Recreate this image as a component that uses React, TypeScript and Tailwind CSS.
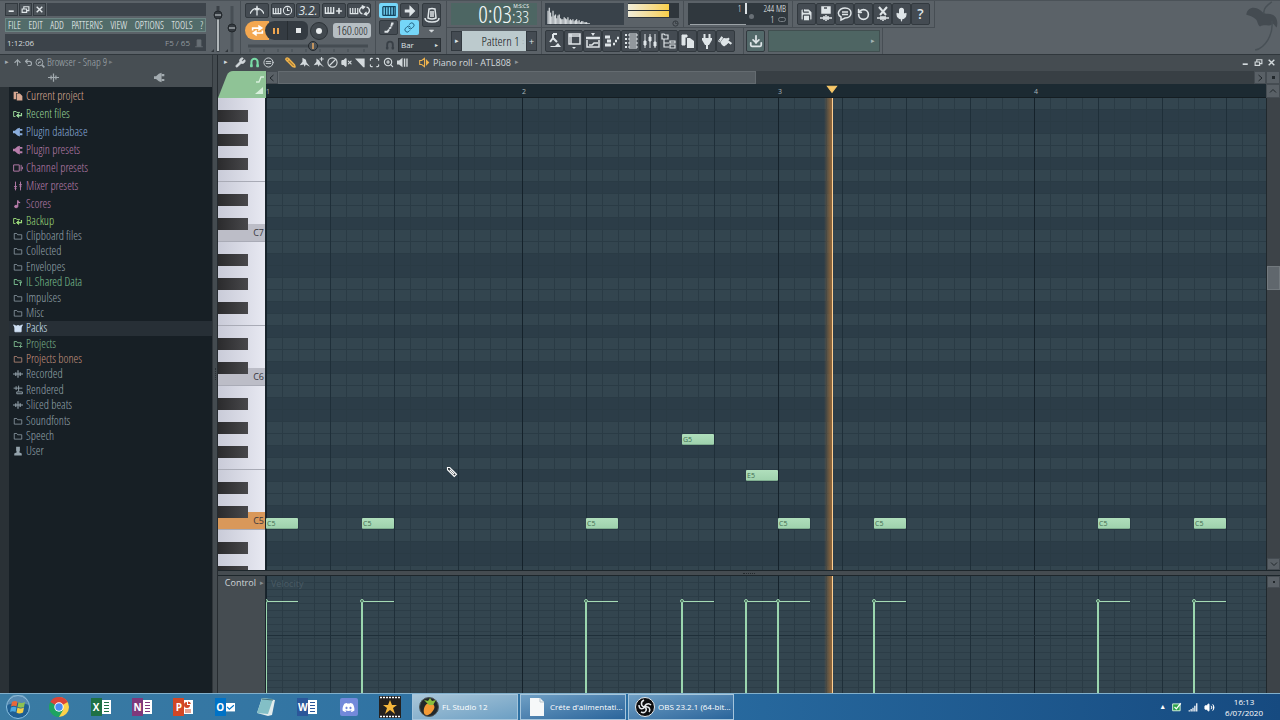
import type { CSSProperties, ReactNode } from 'react';
import {
    Wrench, Pencil, Ban, VolumeX, Scan, ZoomIn, Save,
    Mic, Download, RotateCcw, Link, Plus, ArrowUp, Undo2, Volume2,
    CircleEqual
} from 'lucide-react';
import { FaDiscord, FaHandPointUp } from 'react-icons/fa';

interface Note {
    start: number;
    row: number;
    label: string;
}

interface BrowserItem {
    name: string;
    color: string;
    icon: ReactNode;
    active?: boolean;
}

// One grid step is 16px, a bar holds 16 of them
const STEP = 16;
const ROW = 12;
const OCTAVE = ['B', 'A#', 'A', 'G#', 'G', 'F#', 'F', 'E', 'D#', 'D', 'C#', 'C'];
const DARK_ROWS = ['A#', 'A', 'F#', 'E', 'C#'];

const NOTES: Note[] = [
    { start: 0, row: 35, label: 'C5' },
    { start: 6, row: 35, label: 'C5' },
    { start: 20, row: 35, label: 'C5' },
    { start: 26, row: 28, label: 'G5' },
    { start: 30, row: 31, label: 'E5' },
    { start: 32, row: 35, label: 'C5' },
    { start: 38, row: 35, label: 'C5' },
    { start: 52, row: 35, label: 'C5' },
    { start: 58, row: 35, label: 'C5' },
];

const KEYS = Array.from({ length: 40 }, (_, i) => ({
    name: OCTAVE[i % 12],
    octave: 7 - Math.floor(i / 12),
}));

function Glyph({ children, size = 'size-4' }: { children: ReactNode; size?: string }) {
    return (
        <svg viewBox="0 0 16 16" className={`${size} shrink-0`} fill="none" stroke="currentColor" strokeWidth="1.5" aria-hidden="true">
            {children}
        </svg>
    );
}

const folder = <path d="M2 4h4l1.500 2H14v7H2z" strokeWidth="1.200" />;
const wave = <path d="M0 8h16M4.500 5v6M8 2v12M11.500 5v6" strokeWidth="1.800" />;
const plugShape = (
    <g fill="currentColor" stroke="none">
        <path d="M0 6h3l4-3.500 4-1.500v14l-4-1.500L3 10H0z" />
        <path d="M11 3h4v3h-4zM11 10h4v3h-4z" />
    </g>
);
const recentFolder = <><path d="M4 12H1V4h4l1 1.500h5" /><path d="M7 10.500h6.500V6.500" strokeWidth="2" /><path d="M9 7.500l-3.500 3 3.500 3z" fill="currentColor" /></>;
const pianoKeys = <path d="M2 3v9h12V3M6 3v9M10 3v9" strokeWidth="2" />;
const horseshoe = <path d="M3.500 15V7a4.500 4.500 0 0 1 9 0v8M1.500 12.500h4M10.500 12.500h4" strokeWidth="3" />;
const magnifier = <><circle cx="7" cy="7" r="5.500" /><path d="M11 11l4 4" strokeWidth="2.500" /><path d="M5 7h4M9 4.500L5 9.500" /></>;

const CATEGORIES: BrowserItem[] = [
    { name: 'Current project', color: 'text-[#d8a892]', icon: <g fill="currentColor" stroke="none"><path d="M1 1h7v2H5v10H1z" /><path d="M6 4h5l4 4v7H6z" /></g> },
    { name: 'Recent files', color: 'text-[#9bd99b]', icon: recentFolder },
    { name: 'Plugin database', color: 'text-[#8aaddc]', icon: plugShape },
    { name: 'Plugin presets', color: 'text-[#b87dab]', icon: plugShape },
    { name: 'Channel presets', color: 'text-[#b87dab]', icon: <><path d="M1 3h9v10H1z" /><path d="M13 3v10M15 6v4" /></> },
    { name: 'Mixer presets', color: 'text-[#b87dab]', icon: <path d="M4 1v14M12 1v14M1.500 9h5M9.500 6h5M2.500 12h3M10.500 9h3" /> },
    { name: 'Scores', color: 'text-[#b87dab]', icon: <><ellipse cx="5" cy="12" rx="2.500" ry="2" fill="currentColor" /><path d="M7.500 12V2q0 3 4 4" strokeWidth="2" /></> },
];

const FOLDERS: BrowserItem[] = [
    { name: 'Backup', color: 'text-[#9bd97a]', icon: recentFolder },
    { name: 'Clipboard files', color: 'text-[#94a3ac]', icon: folder },
    { name: 'Collected', color: 'text-[#94a3ac]', icon: folder },
    { name: 'Envelopes', color: 'text-[#94a3ac]', icon: folder },
    { name: 'IL Shared Data', color: 'text-[#7cc092]', icon: <path d="M8 12H2V4h4l1 2h6v3M10 9h4M12 9v5" /> },
    { name: 'Impulses', color: 'text-[#94a3ac]', icon: folder },
    { name: 'Misc', color: 'text-[#94a3ac]', icon: folder },
    { name: 'Packs', color: 'text-[#cfe0f4]', active: true, icon: <path d="M3 6h10v8H3zM1 3l4 2 3-1 3 1 4-2-2 4H3z" fill="currentColor" /> },
    { name: 'Projects', color: 'text-[#7bb48c]', icon: <path d="M8 12H2V4h4l1 2h6v3M9 12h6M12 9v5" /> },
    { name: 'Projects bones', color: 'text-[#c6937f]', icon: folder },
    { name: 'Recorded', color: 'text-[#94a3ac]', icon: wave },
    { name: 'Rendered', color: 'text-[#94a3ac]', icon: <><path d="M1 5h14M5 2v6M9 1v9" /><path d="M6 11h9v3H6z" /></> },
    { name: 'Sliced beats', color: 'text-[#94a3ac]', icon: wave },
    { name: 'Soundfonts', color: 'text-[#94a3ac]', icon: folder },
    { name: 'Speech', color: 'text-[#94a3ac]', icon: folder },
    { name: 'User', color: 'text-[#94a3ac]', icon: <g fill="currentColor" stroke="none"><path d="M5 1h6v6l-1 3 4 2v3H2v-3l4-2-1-3z" /></g> },
];

function ToolButton({ label, children, width = 'w-[19px]', className = 'bg-[#444b52] text-[#dfe5e8]' }: {
    label: string;
    children: ReactNode;
    width?: string;
    className?: string;
}) {
    return (
        <button
            aria-label={label}
            className={`flex shrink-0 items-center justify-center rounded-[2px] border border-[#32393f] ${width} ${className}`}
        >
            {children}
        </button>
    );
}

function WindowButtons({ className }: { className: string }) {
    return (
        <>
            <button aria-label="Minimize" className={className}><Glyph size="size-[9px]"><path d="M3 11h9" strokeWidth="3" /></Glyph></button>
            <button aria-label="Restore" className={className}><Glyph size="size-[9px]"><path d="M5 6V3h9v7h-3M2 7h8v6H2z" strokeWidth="2" /></Glyph></button>
            <button aria-label="Close" className={className}><Glyph size="size-[9px]"><path d="M3 3l10 10M13 3L3 13" strokeWidth="2.500" /></Glyph></button>
        </>
    );
}

function MainMenu() {
    const items = ['FILE', 'EDIT', 'ADD', 'PATTERNS', 'VIEW', 'OPTIONS', 'TOOLS', '?'];
    return (
        <div className="flex w-[206px] shrink-0 flex-col gap-[2px] py-[2px] pl-[5px]">
            <div className="flex h-[13px] gap-px">
                <WindowButtons className="flex w-[13px] items-center justify-center border border-[#32393f] bg-[#4b5258] text-[#dfe5e8]" />
                <div className="flex-1 bg-[#3d444b]" />
            </div>
            <nav className="flex h-[14px] items-center justify-between border border-[#6c8583] bg-[#526c6a] px-[2px] text-[10px] leading-3 text-[#f2f8f8]">
                {items.map((item) => (
                    <button key={item}>{item}</button>
                ))}
            </nav>
            <div className="flex h-[17px] items-center justify-between bg-[#3c434a] px-[2px] font-['Open_Sans',sans-serif] text-[8px] text-[#d5dadd]">
                <span>1:12:06</span>
                <span className="flex items-center gap-1 text-[#91999e]">
                    F5 / 65
                    <Glyph size="size-[10px]"><path d="M5 3h6v10H5zM2 14h12" fill="currentColor" opacity=".5" /></Glyph>
                </span>
            </div>
        </div>
    );
}

function MasterSliders() {
    return (
        <div className="flex w-[34px] shrink-0 justify-center pt-1">
            <svg viewBox="0 0 34 50" className="h-[50px] w-[34px]" role="img" aria-label="Master volume and pitch">
                <path d="M12 1v46" stroke="#3a4046" strokeWidth="3" />
                <path d="M12 12v34" stroke="#d9dee1" strokeWidth="1.500" />
                <path d="M26 1v46" stroke="#474e54" strokeWidth="3" />
                <circle cx="12" cy="10" r="4" fill="#343a40" stroke="#22272b" />
                <circle cx="26" cy="23" r="4" fill="#343a40" stroke="#22272b" />
                <path d="M9 10h6M23 23h6" stroke="#d0d6d9" />
                <path d="M5 47l3-3v3zM19 47l3-3v3z" fill="#30363b" />
            </svg>
        </div>
    );
}

function Transport() {
    return (
        <div className="flex w-[136px] shrink-0 flex-col border-x border-[#474e54] px-1 pt-[2px]">
            <div className="flex h-[15px] justify-between">
                <ToolButton label="Metronome" width="w-6"><Glyph size="size-[14px]"><path d="M0 11q3-6 8-6t8 6M8 2v11" /><path d="M5 7l3-4 3 4z" fill="currentColor" stroke="none" /></Glyph></ToolButton>
                <ToolButton label="Wait for input" width="w-6">
                    <Glyph size="size-[10px]">{pianoKeys}</Glyph>
                    <Glyph size="size-[11px]"><circle cx="8" cy="8" r="6" /><path d="M8 4v4h3" /></Glyph>
                </ToolButton>
                <ToolButton label="Countdown" width="w-6">
                    <span className="font-['Open_Sans',sans-serif] text-xs leading-3 italic">3.2.</span>
                </ToolButton>
                <ToolButton label="Blend recording" width="w-6">
                    <Glyph size="size-[11px]">{pianoKeys}</Glyph>
                    <Plus className="size-2" strokeWidth={5} />
                </ToolButton>
                <ToolButton label="Loop recording" width="w-6">
                    <Glyph size="size-[10px]">{pianoKeys}</Glyph>
                    <Glyph size="size-[11px]"><path d="M7 3A5 5 0 0 0 5 13M9 13A5 5 0 0 0 11 3M4 1l4 2-3 3M12 15l-4-2 3-3" strokeWidth="2" /></Glyph>
                </ToolButton>
            </div>
            <div className="mt-[3px] flex h-[19px] items-center">
                <button aria-label="Song mode" className="flex h-[19px] w-6 items-center justify-center rounded-l-full bg-[#f3a750] text-white">
                    <Glyph size="size-[13px]"><path d="M2 8V5h8M14 8v3H6" strokeWidth="2" /><path d="M9 1l6 4-6 4zM7 7l-6 4 6 4z" fill="currentColor" stroke="none" /></Glyph>
                </button>
                <button aria-label="Pause" className="-ml-1 flex h-[19px] w-[22px] items-center justify-center gap-[2px] rounded-l-full bg-[#343b42]">
                    <span className="h-[6px] w-[2px] bg-[#efa64f]" />
                    <span className="h-[6px] w-[2px] bg-[#efa64f]" />
                </button>
                <button aria-label="Stop" className="flex h-[19px] w-[21px] items-center justify-center rounded-r-md border-l border-[#272d32] bg-[#343b42]">
                    <span className="size-[5px] bg-[#e4e8ea]" />
                </button>
                <button aria-label="Record" className="ml-[2px] flex size-[18px] items-center justify-center rounded-full border border-[#2c3237] bg-[#42494f]">
                    <span className="size-[6px] rounded-full bg-[#e9edef]" />
                </button>
                <button aria-label="Tempo" className="ml-auto h-[15px] w-[38px] rounded-[3px] bg-[#b6bec3] text-[13px] leading-[15px] text-[#15191c]">
                    160<span className="text-[11px]">.000</span>
                </button>
            </div>
            <svg viewBox="0 0 126 12" className="h-3 w-full" role="img" aria-label="Song position">
                <path d="M3 6h120" stroke="#454c52" strokeWidth="3" />
                <path d="M5 9v3M19 9v3M33 9v3M47 9v3M61 9v3M75 9v3M89 9v3M103 9v3M119 9v3" stroke="#454c52" />
                <circle cx="68" cy="6" r="4.500" fill="#4d545a" stroke="#23292d" />
                <path d="M68 3v6" stroke="#e8a860" strokeWidth="1.500" />
            </svg>
        </div>
    );
}

function SnapPanel() {
    return (
        <div className="flex w-[71px] shrink-0 flex-col justify-between border-r border-[#474e54] pt-[2px] pr-[5px] pb-[2px] pl-[3px]">
            <div className="flex gap-[3px]">
                <div className="grid flex-1 grid-cols-2 gap-[2px]">
                    <button aria-label="Typing keyboard" className="flex h-[15px] items-center justify-center rounded-[2px] bg-[#75d6f8] text-[#16465f]">
                        <Glyph size="size-[14px]"><path d="M1 3v10M4 3v10M7 3v10M10 3v10M13 3v10M1 3h14v10H1" /></Glyph>
                    </button>
                    <ToolButton label="Step" width="w-full"><Glyph size="size-3"><path d="M1 8h9" strokeWidth="4" /><path d="M8 2l6 6-6 6z" fill="currentColor" /></Glyph></ToolButton>
                    <ToolButton label="Slide" width="w-full"><Glyph size="size-3"><path d="M2 13h4l2-3M8 9l3-2M11 6l1-4h2" strokeWidth="2.500" /></Glyph></ToolButton>
                    <button aria-label="Link" className="flex h-[15px] items-center justify-center rounded-[2px] bg-[#75d6f8] text-[#1f5a7a]">
                        <Link className="size-[11px]" />
                    </button>
                </div>
                <div className="flex flex-col items-center">
                    <ToolButton label="Metronome knob" width="h-6 w-[19px]"><Glyph><path d="M5 2q3-1 6 0l1 9q-4 2-8 0z" /><path d="M1 11q0 4 7 4t7-4M7 4v6M9 4v6" /></Glyph></ToolButton>
                    <Glyph size="size-[7px]"><path d="M3 7h10l-5 5z" fill="currentColor" className="text-[#d6dbde]" /></Glyph>
                </div>
            </div>
            <label className="flex items-center justify-end gap-[3px] text-[#394047]">
                <Glyph size="size-[10px]">{horseshoe}</Glyph>
                <span className="flex h-[14px] w-[43px] items-center border border-[#2b3136] bg-[#3a4147] px-[2px] text-[#dde2e4]">
                    <select aria-label="Snap" className="w-full appearance-none bg-transparent font-['Open_Sans',sans-serif] text-[8px] leading-3 outline-none">
                        <option>Bar</option>
                    </select>
                    <span className="text-[6px]">▸</span>
                </span>
            </label>
        </div>
    );
}

const SPECTRUM = [14, 17, 12, 8, 14, 9, 10, 6, 9, 10, 6, 5, 5, 7, 6, 5, 7, 4, 5, 4, 5, 3, 4, 5, 3, 4, 2, 3, 3, 2, 2, 2, 1, 1];

function Panels() {
    return (
        <div className="flex shrink-0 flex-col">
            <div className="flex h-[27px]">
                <div className="w-[95px] border-r border-b border-[#474e54] px-1 py-[2px]">
                    <div className="flex h-full items-start justify-end bg-[#4d6663] pr-2 text-[#f4fafa]">
                        <span className="text-[24px] leading-[22px]">0:03</span>
                        <span className="flex flex-col items-end leading-none">
                            <span className="font-['Open_Sans',sans-serif] text-[5px] leading-[6px]">M:S:CS</span>
                            <span className="text-[17px] leading-[16px]">:33</span>
                        </span>
                    </div>
                </div>
                <div className="flex w-[142px] gap-1 border-r border-b border-[#474e54] py-[2px] pr-1 pl-[3px]">
                    <svg viewBox="0 0 80 23" className="h-[22px] w-20 bg-[#39424a]" role="img" aria-label="Spectrum">
                        {SPECTRUM.map((h, i) => (
                            <path key={i} d={`M${2 + i * 1.3} 22V${22 - h}`} stroke="#d5dadd" strokeWidth="1.300" />
                        ))}
                    </svg>
                    <div className="flex w-[52px] flex-col items-end gap-[2px]">
                        <div className="flex w-full flex-col gap-px bg-[#2f363c] py-px">
                            <div className="h-[6px] w-[41px] bg-linear-to-r from-[#f0ecd8] to-[#f9cf45]" />
                            <div className="h-[6px] w-[41px] bg-linear-to-r from-[#f0ecd8] to-[#f9cf45]" />
                        </div>
                        <Glyph size="size-[7px]"><circle cx="8" cy="8" r="6" stroke="#30363b" strokeWidth="2" /><path d="M8 3v5h5" stroke="#30363b" /></Glyph>
                    </div>
                </div>
                <div className="w-[109px] border-r border-b border-[#474e54] px-1 py-[2px]">
                    <div className="flex h-full flex-col bg-[#30383e] px-[2px] text-[9px] leading-[11px] text-[#eef2f4]">
                        <div className="flex justify-end">
                            <span>1</span>
                            <span className="mr-4 ml-1 w-[2px] bg-[#dce1e4]" />
                            <span>244 MB</span>
                        </div>
                        <div className="flex items-center">
                            <span className="h-px w-14 self-end bg-[#9ba2a6]" />
                            <span className="ml-[3px] size-[5px] self-start rounded-full bg-[#697076]" />
                            <span className="mr-1 ml-auto">1</span>
                            <span className="h-[5px] w-2 rounded-full border border-[#798086]" />
                        </div>
                    </div>
                </div>
                <div className="flex border-r border-b border-[#474e54] py-[2px] pr-1 pl-1">
                    <ToolButton label="Save"><Save className="size-[15px]" fill="currentColor" stroke="#444b52" /></ToolButton>
                    <ToolButton label="Render as audio">
                        <Glyph><path d="M4 1h8v6H4z" fill="currentColor" /><path d="M6 2h3" stroke="#444b52" /><path d="M2 12h12M6 10v4M10 10v4M8 9v6" /></Glyph>
                    </ToolButton>
                    <ToolButton label="Comments"><Glyph><path d="M8 2c8 0 8 10 0 10l-4 2v-3C-1 8 2 2 8 2zM5 6h6M5 8.500h6" /></Glyph></ToolButton>
                    <ToolButton label="Undo"><RotateCcw className="size-[13px]" strokeWidth={3} /></ToolButton>
                    <ToolButton label="Cut">
                        <Glyph><path d="M4 1l7 8M12 1L5 9" strokeWidth="2" /><path d="M2 12h12M6 10v4M10 10v4M8 10v5" /></Glyph>
                    </ToolButton>
                    <ToolButton label="Record audio"><Mic className="size-[15px]" fill="currentColor" strokeWidth={2} /></ToolButton>
                    <ToolButton label="Help"><span className="font-['Open_Sans',sans-serif] text-[14px] leading-4 font-semibold">?</span></ToolButton>
                </div>
            </div>
            <div className="flex h-[26px]">
                <div className="flex w-[95px] border-r border-[#474e54] px-1 py-[3px]">
                    <button aria-label="Previous pattern" className="w-[11px] border border-[#32393f] bg-[#444b52] text-[7px] text-[#dfe5e8]">▸</button>
                    <button className="flex flex-1 items-center justify-end gap-[3px] bg-[#bccacd] pr-[2px] text-[13px] leading-4 whitespace-nowrap text-[#101416]">
                        Pattern 1 <span className="text-[8px] text-[#7a878b]">:</span>
                    </button>
                    <button aria-label="Add pattern" className="w-[11px] border border-[#32393f] bg-[#444b52] font-['Open_Sans',sans-serif] text-[9px] leading-none text-[#dfe5e8]">+</button>
                </div>
                <div className="flex w-[202px] border-r border-[#474e54] py-[2px] pr-[3px] pl-[3px]">
                    <ToolButton label="Touch controller"><Glyph><path d="M6 1h4M6 1v4l4 4M6 5L3 9" strokeWidth="2" /><path d="M3 14h11l-3-4-3 3H4z" fill="currentColor" stroke="none" /></Glyph></ToolButton>
                    <ToolButton label="Playlist"><Glyph><path d="M3 1h11v10H3zM5 1v10M3 3h11" /><path d="M6 14h4l-2 2z" fill="currentColor" stroke="none" /></Glyph></ToolButton>
                    <ToolButton label="Step sequencer"><Glyph><path d="M6 0h4l-2 3z" fill="currentColor" stroke="none" /><path d="M1 5h14" strokeWidth="2.500" /><path d="M2 7v7h12V7M4 12h3l2-2h4" /></Glyph></ToolButton>
                    <ToolButton label="Piano roll"><Glyph><path d="M1 4h5M3 8h4M1 12h6" strokeWidth="2.800" /><path d="M9 11h2M11 8h2M13 5h2" strokeWidth="2.500" /></Glyph></ToolButton>
                    <ToolButton label="Channel rack"><Glyph><path d="M2 2h2M2 6h2M2 10h2M2 14h2" strokeWidth="2" /><path d="M6 1h8v2H6zM6 5h8v2H6zM6 9h8v2H6zM6 13h8v2H6z" strokeWidth="1" /></Glyph></ToolButton>
                    <ToolButton label="Mixer"><Glyph><path d="M3 1v14M8 1v14M13 1v14" strokeWidth="1" /><path d="M2 8h2v4H2zM7 4h2v4H7zM12 9h2v4h-2z" fill="currentColor" strokeWidth="1" /></Glyph></ToolButton>
                    <ToolButton label="Browser"><Glyph><path d="M1 1h2l1 1h3v4H1zM3 6v8h5M3 10h5M9 8h5v2H9zM9 12h5v3H9z" strokeWidth="1.200" /></Glyph></ToolButton>
                    <ToolButton label="Copy"><Glyph><path d="M2 2h5v2H5v8H2z" fill="currentColor" strokeWidth="1" /><path d="M7 5h3l4 3v7H7z" fill="currentColor" stroke="none" /></Glyph></ToolButton>
                    <ToolButton label="Plugins"><Glyph><path d="M3 5h10v2l-3 5H6L3 7z" fill="currentColor" stroke="none" /><path d="M5.500 1v4M10.500 1v4M8 11v5" strokeWidth="2" /></Glyph></ToolButton>
                    <ToolButton label="Tempo tapper"><FaHandPointUp className="size-[13px] rotate-[125deg]" /></ToolButton>
                </div>
                <div className="flex gap-[3px] border-r border-[#474e54] py-[2px] pr-[2px] pl-[2px]">
                    <ToolButton label="Online content" className="bg-[#53696a] text-[#dfe5e8]"><Download className="size-[14px]" strokeWidth={3} /></ToolButton>
                    <div className="flex w-[112px] items-center justify-end border border-[#414f50] bg-[#4e6563] pr-1 text-[7px] text-[#a4b4b3]">▸</div>
                </div>
            </div>
        </div>
    );
}

function Toolbar() {
    return (
        <header className="flex h-[54px] shrink-0 border-t border-[#4b5258] bg-[#5b6268]">
            <MainMenu />
            <MasterSliders />
            <Transport />
            <SnapPanel />
            <Panels />
            <svg viewBox="0 0 34 54" className="ml-auto h-[53px] w-[34px] shrink-0" role="img" aria-label="Logo">
                <path d="M0 14C1 6 9 5 15 10c3 3 4 3 7 3 8 0 11 6 9 14-2-1-2-3-4-4-3 4-8 0-13 3-3-2-2-6-5-8-3-2-5-3-9-4z" fill="#444b51" />
                <path d="M26 1C20 5 17 9 18 13M26 20c2 14-7 28-17 30" fill="none" stroke="#485056" strokeWidth="1.500" />
            </svg>
        </header>
    );
}

function BrowserRow({ item, className }: { item: BrowserItem; className: string }) {
    return (
        <li className={className}>
            <button className={`flex h-full w-full items-center gap-[3px] pl-1 text-left leading-[14px] ${item.color} ${item.active ? 'bg-[#272f36]' : ''}`}>
                <Glyph size="size-[10px]">{item.icon}</Glyph>
                {item.name}
            </button>
        </li>
    );
}

function Browser() {
    return (
        <aside className="flex w-[218px] shrink-0 border-r border-[#262c31] bg-[#444b50]">
            <div className="flex flex-1 flex-col">
                <div className="flex h-8 shrink-0 flex-col bg-[#474e53] text-[#a3abb0]">
                    <div className="flex h-[15px] items-center gap-[2px] pl-[5px] text-[11px]">
                        <span className="w-[6px] text-[7px]">▸</span>
                        <ArrowUp className="size-[9px]" strokeWidth={3} />
                        <Undo2 className="size-[9px]" strokeWidth={3} />
                        <Glyph size="size-[10px]">{magnifier}</Glyph>
                        <span>Browser - Snap 9</span>
                        <span className="text-[7px] text-[#747c81]">▸</span>
                    </div>
                    <div className="flex h-[15px] items-center justify-around">
                        <Glyph size="size-[11px]">{wave}</Glyph>
                        <Glyph size="size-[11px]">{plugShape}</Glyph>
                    </div>
                </div>
                <div className="min-h-0 flex-1 border-l-[9px] border-[#2a3136] bg-[#171f25] text-[12px]">
                    <ul>
                        {CATEGORIES.map((item) => <BrowserRow key={item.name} item={item} className="h-[18px]" />)}
                    </ul>
                    <ul className="flex h-[246px] flex-col">
                        {FOLDERS.map((item) => <BrowserRow key={item.name} item={item} className="min-h-0 flex-1" />)}
                    </ul>
                </div>
            </div>
            <div className="flex w-[5px] items-center justify-center border-l border-[#30363b]">
                <span className="h-3 border-l border-dotted border-[#2a3035]" />
            </div>
        </aside>
    );
}

function RollToolbar() {
    return (
        <div className="flex h-4 shrink-0 items-center bg-[#454c51] pb-px pl-[6px] text-[#d3d9dc]">
            <span className="w-2 text-[7px]">▸</span>
            <div className="flex items-center gap-[3px] pl-[3px]">
                <Wrench className="size-[11px]" fill="currentColor" />
                <Glyph size="size-[11px] text-[#79dba6]">{horseshoe}</Glyph>
                <CircleEqual className="size-[11px]" />
            </div>
            <div className="ml-[11px] flex items-center gap-[3px]">
                <Pencil className="size-[11px] -scale-x-100 text-[#efb34d]" fill="#a67c35" strokeWidth={3} />
                <Glyph size="size-[11px]"><path d="M5 1l5 3 1 4 5 6-6-3-2 3-1-3-6 1 4-5z" fill="currentColor" stroke="none" /></Glyph>
                <Glyph size="size-[11px]"><path d="M5 2l4 3 2 4 5 6-6-4-2 3-1-3-6 1 4-5z" fill="currentColor" stroke="none" /><path d="M12.500 0v6M9.500 3h6" /></Glyph>
                <Ban className="size-[11px] rotate-90" strokeWidth={2.5} />
                <VolumeX className="size-[11px]" fill="currentColor" strokeWidth={2.5} />
                <Glyph size="size-[11px]"><path d="M0 2h14v13h-2z" fill="currentColor" stroke="none" /><path d="M1 6l9 9" stroke="#454c51" strokeWidth="2" /></Glyph>
                <Scan className="size-[11px]" strokeWidth={2.5} />
                <ZoomIn className="size-[11px]" strokeWidth={2.5} />
                <Glyph size="size-[11px]"><path d="M0 5h3l5-4v14l-5-4H0z" fill="currentColor" stroke="none" /><path d="M11 2v12M14.500 2v12" strokeWidth="2" /></Glyph>
            </div>
            <Glyph size="ml-[11px] size-[11px]"><path d="M1 5h3l4-3v12l-4-3H1z" stroke="#efb34d" /><path d="M10 3l5 5-5 5z" fill="#efb34d" stroke="none" /></Glyph>
            <h1 className="ml-[3px] font-['Open_Sans',sans-serif] text-[9px]">Piano roll - ATL808</h1>
            <span className="ml-1 text-[7px] text-[#8d9499]">▸</span>
            <div className="ml-auto flex gap-[3px] pr-1">
                <WindowButtons className="flex size-[10px] items-center justify-center" />
            </div>
        </div>
    );
}

function Keyboard() {
    return (
        <div className="w-12 shrink-0 overflow-hidden border-r border-[#1a252c] bg-linear-to-r from-[#c9cbd8] to-[#e8e9f2] font-['Open_Sans',sans-serif]">
            {KEYS.map((key, i) => {
                const black = key.name.includes('#');
                const root = key.name === 'C';
                const middle = root && key.octave === 5;
                return (
                    <div key={i} className={`relative h-3 ${root || key.name === 'F' ? 'border-b border-[#a9abb6]' : ''} ${middle ? 'bg-[#d9985a]' : root ? 'bg-[#bcbdc7]' : ''}`}>
                        {black && <div className="h-3 w-[30px] bg-linear-to-r from-[#2b2b2d] to-[#48484b]" />}
                        {root && (
                            <span className={`absolute right-0 bottom-0 flex h-[17px] w-[17px] items-center justify-end pr-px text-[9px] leading-[17px] text-[#37363d] ${middle ? 'bg-[#d9985a]' : 'bg-[#bcbdc7]'}`}>
                                C{key.octave}
                            </span>
                        )}
                    </div>
                );
            })}
        </div>
    );
}

function GridLines() {
    return (
        <div className="absolute inset-0 bg-[repeating-linear-gradient(90deg,#15222b_0_1px,transparent_1px_256px),repeating-linear-gradient(90deg,#1f2f39_0_1px,transparent_1px_64px),repeating-linear-gradient(90deg,#2a3b45_0_1px,transparent_1px_16px)]" />
    );
}

function Playhead() {
    return <div className="absolute inset-y-0 left-[558px] w-[9px] border-r border-[#ffcf92] bg-linear-to-r from-transparent to-[#93683a]" />;
}

function NoteGrid() {
    return (
        <div className="relative min-w-0 flex-1 overflow-hidden bg-[#33454f] font-['Open_Sans',sans-serif]">
            {KEYS.map((key, i) => (
                <div key={i} className={`h-3 border-b border-[#2a3b45] ${DARK_ROWS.includes(key.name) ? 'bg-[#2c3d48]' : 'bg-[#33454f]'}`} />
            ))}
            <GridLines />
            <Playhead />
            {NOTES.map((note) => {
                const place: CSSProperties = { left: note.start * STEP, top: note.row * ROW };
                return (
                    <div key={note.start} style={place} className="absolute h-[11px] w-8 rounded-[1px] border-b border-[#7fae90] bg-linear-to-b from-[#b0dfbc] to-[#9fd2ad] pl-px text-[7px] leading-[11px] text-[#3f6b4f]">
                        {note.label}
                    </div>
                );
            })}
            <Glyph size="absolute top-[368px] left-[180px] size-3">
                <path d="M2 2l3 0 9 9-3 3-9-9z" fill="#1c252b" stroke="#fff" />
                <path d="M5 5l6 6" stroke="#fff" />
            </Glyph>
        </div>
    );
}

function VelocityLane() {
    return (
        <div className="relative min-w-0 flex-1 overflow-hidden bg-[#33454f] bg-[repeating-linear-gradient(180deg,transparent_0_6px,#2c3d47_6px_7px)]">
            <GridLines />
            <div className="absolute inset-x-0 top-1/2 h-px bg-[#1f2f39]" />
            <span className="absolute top-0 left-[5px] font-['Open_Sans',sans-serif] text-[9px] leading-[15px] text-[#4a5b65]">Velocity</span>
            <Playhead />
            {NOTES.map((note) => (
                <div key={note.start} style={{ left: note.start * STEP - 1 }} className="absolute top-[25px] bottom-0 w-[33px] border-l-2 border-[#9bd6ae]">
                    <span className="block h-px w-full bg-[#a5dbb5]" />
                    <span className="absolute -top-[2px] -left-[3px] size-1 rounded-full border border-[#9bd6ae] bg-[#3f6350]" />
                </div>
            ))}
        </div>
    );
}

function Scroller({ children }: { children?: ReactNode }) {
    return <div className="flex w-[14px] shrink-0 flex-col border-l border-[#20282d] bg-[#3d4348]">{children}</div>;
}

const scrollButton = 'flex shrink-0 items-center justify-center border border-[#454c52] bg-[#596066] text-[#22282c]';

function PianoRoll() {
    return (
        <main className="flex min-w-0 flex-1 flex-col bg-[#454c51]">
            <RollToolbar />
            <div className="flex h-[27px] shrink-0">
                <div className="w-12 shrink-0">
                    <svg viewBox="0 0 48 27" className="h-[27px] w-12" role="img" aria-label="Roll options">
                        <path d="M0 27L9 4Q11 0 15 0h33v27z" fill="#8fc396" />
                        <path d="M38 11h3l2-5h3" fill="none" stroke="#d8f0dc" strokeWidth="1.300" />
                        <path d="M37 23h8v-7z" fill="#d8f0dc" />
                    </svg>
                </div>
                <div className="flex min-w-0 flex-1 flex-col">
                    <div className="flex h-[13px]">
                        <button aria-label="Scroll left" className={`${scrollButton} w-3`}><Glyph size="size-2"><path d="M11 2L4 8l7 6" strokeWidth="2" /></Glyph></button>
                        <div className="flex flex-1 bg-[#383f44]">
                            <div className="w-[49%] border border-[#646b70] bg-[#565d62]" />
                        </div>
                        <button aria-label="Scroll right" className={`${scrollButton} w-3`}><Glyph size="size-2"><path d="M5 2l7 6-7 6" strokeWidth="2" /></Glyph></button>
                        <button aria-label="Zoom" className={`${scrollButton} w-[14px]`}><span className="size-[3px] bg-[#22282c]" /></button>
                    </div>
                    <div className="flex flex-1">
                        <div className="relative flex min-w-0 flex-1 items-end overflow-hidden border-b border-[#141d22] bg-[#1c2a32] font-['Open_Sans',sans-serif] text-[7px] leading-[10px] text-[#a9b4b9]">
                            {[1, 2, 3, 4].map((bar) => (
                                <span key={bar} className={bar < 4 ? 'w-64 shrink-0' : 'shrink-0'}>{bar}</span>
                            ))}
                            <Glyph size="absolute top-0 left-[560px] size-3"><path d="M2 3h12l-6 8z" fill="#f8c869" stroke="#f8c869" /></Glyph>
                        </div>
                        <button aria-label="Scroll up" className={`${scrollButton} w-[14px]`}><Glyph size="size-2"><path d="M2 11l6-6 6 6" strokeWidth="2" /></Glyph></button>
                    </div>
                </div>
            </div>
            <div className="flex min-h-0 flex-1">
                <Keyboard />
                <NoteGrid />
                <Scroller>
                    <div className="h-[168px]" />
                    <div className="h-6 border border-[#72797e] bg-[#60676d]" />
                    <button aria-label="Scroll down" className={`${scrollButton} mt-auto h-3`}><Glyph size="size-2"><path d="M2 5l6 6 6-6" strokeWidth="2" /></Glyph></button>
                </Scroller>
            </div>
            <div className="flex h-[6px] shrink-0 items-center justify-center border-y border-[#1d262b] bg-[#454c51]">
                <span className="w-3 border-t border-dotted border-[#23292d]" />
            </div>
            <div className="flex h-[117px] shrink-0">
                <div className="flex w-12 shrink-0 items-start justify-end gap-1 border-r border-[#1a252c] pr-px font-['Open_Sans',sans-serif] text-[9px] leading-[14px] text-[#d0d6d9]">
                    Control <span className="text-[7px] text-[#868d92]">▸</span>
                </div>
                <VelocityLane />
                <Scroller>
                    <button aria-label="Lane size" className={`${scrollButton} h-3`}><span className="size-[2px] bg-[#22282c]" /></button>
                </Scroller>
            </div>
        </main>
    );
}

function OfficeIcon({ letter, color }: { letter: string; color: string }) {
    return (
        <span className="flex h-[18px] w-5 items-center">
            <span className={`flex h-[18px] w-[11px] items-center justify-center text-[10px] font-bold text-white ${color}`}>{letter}</span>
            <span className="flex h-[14px] w-[9px] flex-col justify-evenly bg-white px-[2px]">
                <span className={`h-px ${color}`} />
                <span className={`h-px ${color}`} />
                <span className={`h-px ${color}`} />
                <span className={`h-px ${color}`} />
            </span>
        </span>
    );
}

const PINNED: { name: string; icon: ReactNode }[] = [
    {
        name: 'Start',
        icon: (
            <svg viewBox="0 0 24 24" className="size-6 shrink-0">
                <circle cx="12" cy="12" r="11.500" fill="#1f5f93" stroke="#8cc2e2" />
                <path d="M1 10a11 11 0 0 1 22 0q-11-5-22 0z" fill="#8fb6cf" opacity=".5" />
                <path d="M6 7q3-2 5.500 0l-1 4.500q-3-1.500-5.500 0z" fill="#e8683a" />
                <path d="M12.500 7q3 2 6.500 0l-1 5q-3 1.500-6.500 0z" fill="#8dc152" />
                <path d="M5 12.500q3-1.500 5.500 0l-1 4.500q-3-1.500-5.500 0z" fill="#4aa8e0" />
                <path d="M11.500 12.500q3 2 6.500 0l-1 5q-4 2-6.500 0z" fill="#f6cf45" />
            </svg>
        ),
    },
    {
        name: 'Chrome',
        icon: (
            <svg viewBox="0 0 20 20" className="size-5">
                <path d="M10 10V0A10 10 0 0 1 10 20z" fill="#fdd24b" />
                <path d="M10 10L1.300 5A10 10 0 0 0 10 20l4-7z" fill="#1ea362" />
                <path d="M10 10L1.300 5A10 10 0 0 1 18.700 5z" fill="#dc4437" />
                <circle cx="10" cy="10" r="4.700" fill="#fff" />
                <circle cx="10" cy="10" r="3.700" fill="#4a8af4" />
            </svg>
        ),
    },
    { name: 'Excel', icon: <OfficeIcon letter="X" color="bg-[#1f7145]" /> },
    { name: 'OneNote', icon: <OfficeIcon letter="N" color="bg-[#80397b]" /> },
    {
        name: 'PowerPoint',
        icon: (
            <span className="flex h-[18px] w-5 items-center">
                <span className="flex h-[18px] w-[11px] items-center justify-center bg-[#d24726] text-[10px] font-bold text-white">P</span>
                <svg viewBox="0 0 9 14" className="h-[14px] w-[9px]">
                    <path d="M0 0h9v14H0z" fill="#fff" />
                    <path d="M3 2a3 3 0 1 0 3 3H3z" fill="#d24726" />
                    <path d="M4 1.500V4h3a3 3 0 0 0-3-2.500zM1 9.500h6v1H1zM1 11.500h6v1H1z" fill="#d24726" />
                </svg>
            </span>
        ),
    },
    {
        name: 'Outlook',
        icon: (
            <span className="flex h-[18px] w-5 items-center">
                <span className="flex h-[18px] w-[11px] items-center justify-center bg-[#0072c6] text-[10px] font-bold text-white">O</span>
                <Glyph size="size-[9px]"><path d="M0 0h16v15H0z" fill="#fff" stroke="none" /><path d="M2 7l4 4 8-7" stroke="#0072c6" strokeWidth="2" /></Glyph>
            </span>
        ),
    },
    {
        name: 'Notepad',
        icon: (
            <svg viewBox="0 0 20 20" className="size-5">
                <path d="M6 1l13 2-3 15-4 1L1 16z" fill="#e2ecec" />
                <path d="M6 1l11 1-5 15-11-1z" fill="#83bfc6" />
                <path d="M6 2l11 1" stroke="#4b7077" />
            </svg>
        ),
    },
    { name: 'Word', icon: <OfficeIcon letter="W" color="bg-[#2b579a]" /> },
    { name: 'Discord', icon: <span className="flex size-[18px] items-center justify-center rounded-[2px] bg-[#7289da] text-white"><FaDiscord className="size-[13px]" /></span> },
    {
        name: 'Movie editor',
        icon: (
            <svg viewBox="0 0 22 22" className="size-[22px]">
                <path d="M0 0h22v22H0z" fill="#24211f" />
                <path d="M1 1.500h20M1 20.500h20" stroke="#fff" strokeWidth="1.500" strokeDasharray="2 1" />
                <path d="M11 4l2 5h5l-4 3 2 6-5-4-5 4 2-6-4-3h5z" fill="#f6b73c" />
            </svg>
        ),
    },
];

function TaskButton({ label, active, children }: { label: string; active?: boolean; children: ReactNode }) {
    return (
        <button className={`flex h-full w-[106px] items-center border border-[#a5c5dc] pl-[6px] text-[8px] text-white ${active ? 'bg-linear-to-br from-[#a9c6d8] to-[#6c9fc4]' : 'bg-linear-to-br from-[#6f9fc4] to-[#2a659b]'}`}>
            {children}
            <span className="whitespace-nowrap">{label}</span>
        </button>
    );
}

function Taskbar() {
    return (
        <footer className="flex h-[27px] shrink-0 items-center border-t border-[#82b0cc] bg-linear-to-r from-[#3a7ba3] via-[#2a6ea3] to-[#164a80] font-['Open_Sans',sans-serif]">
            <div className="flex w-[412px] shrink-0 items-center justify-between pr-[11px] pl-[7px]">
                {PINNED.map((app) => (
                    <button key={app.name} aria-label={app.name} className="flex w-[22px] items-center justify-center">{app.icon}</button>
                ))}
            </div>
            <div className="flex h-full gap-[2px]">
                <TaskButton label="FL Studio 12" active>
                    <svg viewBox="0 0 20 20" className="mr-[3px] size-5 shrink-0">
                        <circle cx="10" cy="10" r="9.500" fill="#23282a" stroke="#4e5556" />
                        <path d="M12 6c5 2 4 6 1 9-3 4-7 4-8 1C4 12 6 5 12 6z" fill="#f49a35" />
                        <path d="M10 8L5 3l4 1 2-3 2 3 4-1-3 5z" fill="#8abf3e" />
                    </svg>
                </TaskButton>
                <TaskButton label="Créte d'alimentati...">
                    <svg viewBox="0 0 20 20" className="mr-[3px] size-5 shrink-0"><path d="M3 1h10l4 4v14H3z" fill="#f6f8f9" /><path d="M13 1v4h4" fill="none" stroke="#b9c4cb" /></svg>
                </TaskButton>
                <TaskButton label="OBS 23.2.1 (64-bit...">
                    <svg viewBox="0 0 20 20" className="mr-[3px] size-5 shrink-0">
                        <circle cx="10" cy="10" r="9.500" fill="#0d0d0f" stroke="#e5e9ec" />
                        <path d="M9 3c-4 2-3 7 1 7M16 8c-3-3-7 0-6 3M6 15c4 2 7-2 4-5M4 8c0 4 3 5 6 2M14 15c2-3 0-6-4-5" fill="none" stroke="#e5e9ec" strokeWidth="1.500" />
                    </svg>
                </TaskButton>
            </div>
            <div className="ml-auto flex items-center gap-[6px] pr-[17px] text-white">
                <span className="text-[7px]">▲</span>
                <Glyph size="size-[10px]"><path d="M1 3h12v11H1z" fill="#2da34a" stroke="#d9f2de" /><path d="M4 8l3 3 7-9" stroke="#fff" strokeWidth="2" /></Glyph>
                <Glyph size="size-[10px]"><path d="M2 15v-2M5 15v-4M8 15V9M11 15V6M14 15V2" strokeWidth="2" /></Glyph>
                <Volume2 className="size-[11px]" fill="currentColor" />
                <div className="ml-1 text-center text-[8px] leading-[11px]">
                    <div>16:13</div>
                    <div>6/07/2020</div>
                </div>
            </div>
        </footer>
    );
}

export default function App() {
    return (
        <div className="flex h-screen flex-col overflow-hidden bg-[#454c51] font-['Open_Sans_Condensed_Light','Open_Sans_Condensed','Open_Sans',sans-serif] select-none">
            <Toolbar />
            <div className="flex min-h-0 flex-1 border-t border-[#30373c]">
                <Browser />
                <PianoRoll />
            </div>
            <Taskbar />
        </div>
    );
}
